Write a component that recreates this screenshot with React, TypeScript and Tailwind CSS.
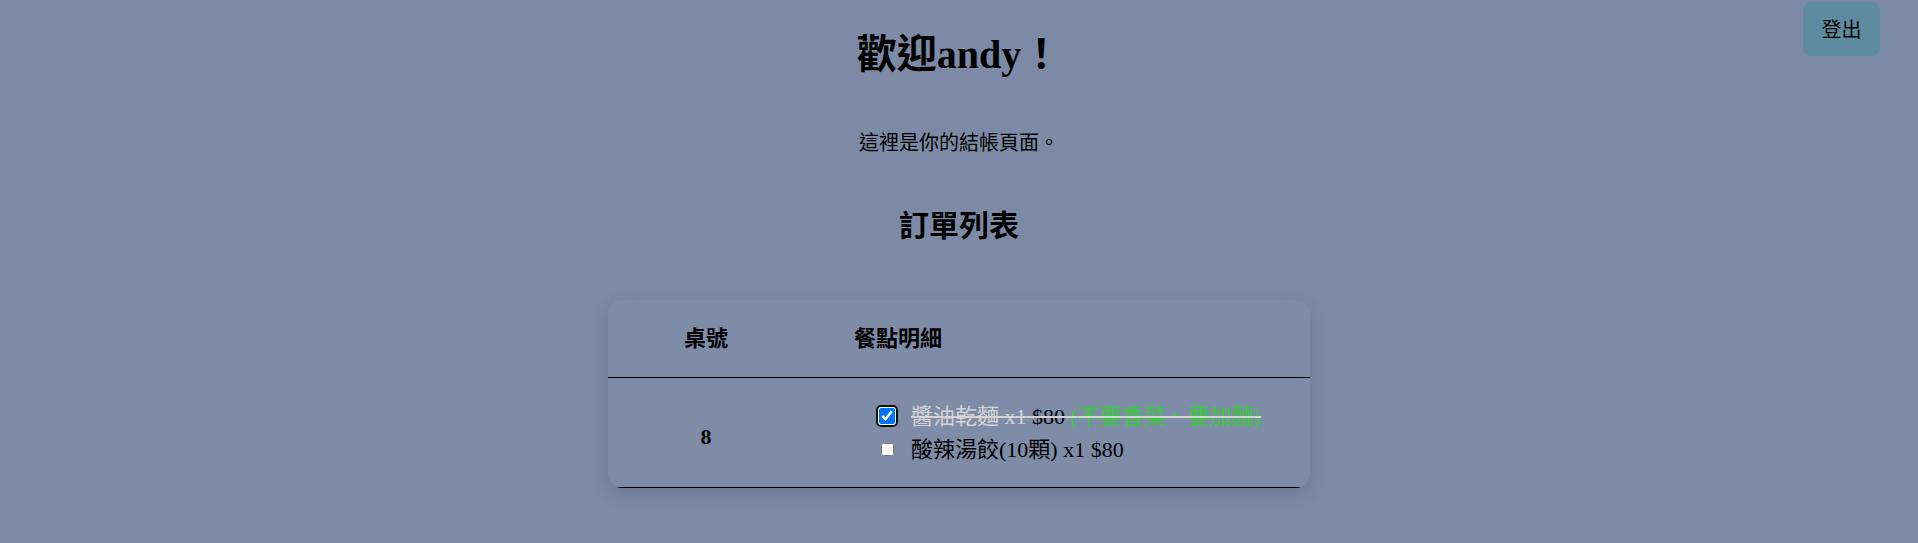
import { useState } from "react"

type OrderItem = {
    name: string
    qty: number
    price: number
    note?: string
    done: boolean
}

const initialItems: OrderItem[] = [
    { name: "醬油乾麵", qty: 1, price: 80, note: "不要香菜、要加麵", done: true },
    { name: "酸辣湯餃(10顆)", qty: 1, price: 80, done: false },
]

export default function App() {
    const [items, setItems] = useState(initialItems)

    const toggle = (idx: number) => {
        setItems(items.map((it, i) => (i === idx ? { ...it, done: !it.done } : it)))
    }

    return (
        <div className="relative min-h-[543px] w-full bg-[#7d8aa5] text-black font-['Liberation_Serif','Noto_Sans_CJK_TC',serif]">
            <button className="absolute right-[38px] top-[2px] h-[54px] w-[77px] rounded-[8px] bg-[#5f8ba1] text-[20px] font-['Noto_Sans_CJK_TC',sans-serif] text-black">
                登出
            </button>

            <div className="flex flex-col items-center pt-[26px]">
                <h1 className="text-[40px] leading-[58px] font-bold">歡迎andy！</h1>
                <p className="mt-[44px] text-[20px] leading-[30px]">這裡是你的結帳頁面。</p>
                <h2 className="mt-[46px] text-[30px] leading-[44px] font-bold">訂單列表</h2>

                <div className="mt-[52px] w-[702px] overflow-hidden rounded-[14px] bg-[#7f8ca7] shadow-[0_6px_16px_rgba(40,50,80,0.18)]">
                    <div className="flex h-[78px] items-center border-b border-black text-[22px] font-bold">
                        <div className="w-[196px] text-center">桌號</div>
                        <div className="pl-[50px]">餐點明細</div>
                    </div>
                    <div className="flex h-[110px] items-center border-b border-black">
                        <div className="w-[196px] pt-[8px] text-center text-[22px] font-bold">8</div>
                        <ul className="flex flex-col pl-[77px] text-[22px] leading-[33px]">
                            {items.map((it, i) => (
                                <li key={i} className="flex items-center">
                                    {it.done ? (
                                        <span className="-ml-[5px] -mr-[4px] flex rounded-[5px] border-2 border-[#101010] bg-white p-[1px]">
                                            <input
                                                type="checkbox"
                                                checked={it.done}
                                                onChange={() => toggle(i)}
                                                className="m-0 h-[16px] w-[16px] outline-none"
                                            />
                                        </span>
                                    ) : (
                                        <input
                                            type="checkbox"
                                            checked={it.done}
                                            onChange={() => toggle(i)}
                                            className="m-0 h-[13px] w-[13px]"
                                        />
                                    )}
                                    <span
                                        className={
                                            it.done
                                                ? "ml-[17px] text-[#d3d3d3] line-through decoration-[#d3d3d3]"
                                                : "ml-[17px]"
                                        }
                                    >
                                        {it.name} x{it.qty} <span className={it.done ? "text-black" : ""}>${it.price}</span>
                                        {it.note && <span className="text-[#32cd32]"> ({it.note})</span>}
                                    </span>
                                </li>
                            ))}
                        </ul>
                    </div>
                </div>
            </div>
        </div>
    )
}
